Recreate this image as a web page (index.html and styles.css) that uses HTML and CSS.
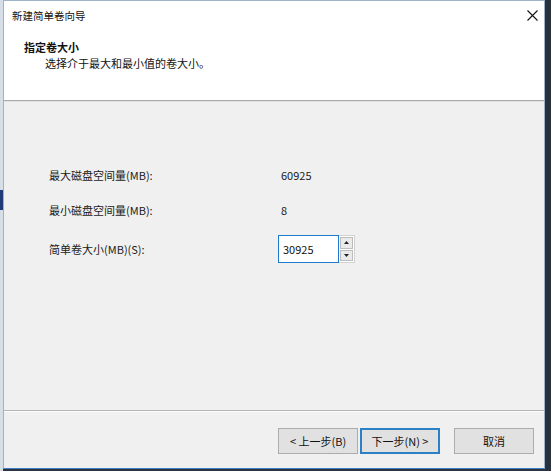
FILE: index.html
```html
<!DOCTYPE html>
<html lang="zh-CN">
<head>
<meta charset="utf-8">
<title>新建简单卷向导</title>
<link rel="stylesheet" href="styles.css">
</head>
<body>
<div class="screen">
  <div class="bg-left">
    <div class="bg-left-band"></div>
    <div class="bg-left-dark"></div>
  </div>
  <div class="dialog">
    <div class="header">
      <div class="titlebar">
        <span class="title">新建简单卷向导</span>
        <span class="close">
          <svg width="11" height="11" viewBox="0 0 11 11"><path d="M0.5 0.5 L10.5 10.5 M10.5 0.5 L0.5 10.5" stroke="#111" stroke-width="1.1" fill="none"/></svg>
        </span>
      </div>
      <div class="head-text">
        <div class="h1">指定卷大小</div>
        <div class="h2">选择介于最大和最小值的卷大小。</div>
      </div>
    </div>
    <div class="content">
      <div class="row">
        <span class="label">最大磁盘空间量(MB):</span>
        <span class="value">60925</span>
      </div>
      <div class="row">
        <span class="label">最小磁盘空间量(MB):</span>
        <span class="value">8</span>
      </div>
      <div class="row row-input">
        <span class="label">简单卷大小(MB)(S):</span>
        <div class="spin">
          <div class="spin-edit">30925</div>
          <div class="spin-btns">
            <div class="spin-btn"><svg width="5" height="3" viewBox="0 0 5 3"><path d="M0 3 L2.5 0 L5 3 Z" fill="#222"/></svg></div>
            <div class="spin-btn"><svg width="5" height="3" viewBox="0 0 5 3"><path d="M0 0 L2.5 3 L5 0 Z" fill="#222"/></svg></div>
          </div>
        </div>
      </div>
    </div>
    <div class="footer">
      <div class="btn">&lt; 上一步(B)</div>
      <div class="btn btn-default">下一步(N) &gt;</div>
      <div class="btn btn-cancel">取消</div>
    </div>
  </div>
  <div class="bg-right"></div>
</div>
</body>
</html>
```

FILE: styles.css
```css
html, body {
  margin: 0;
  padding: 0;
}
body {
  width: 551px;
  height: 471px;
  overflow: hidden;
  font-family: "Noto Sans CJK SC", "Microsoft YaHei", "Noto Sans", sans-serif;
  font-size: 11px;
  color: #111;
  background: #2a3340;
}
.screen {
  display: flex;
  width: 551px;
  height: 471px;
}
.bg-left {
  width: 3px;
  height: 471px;
  background: #d6dee8;
  display: flex;
  flex-direction: column;
}
.bg-left-band {
  height: 190px;
}
.bg-left-dark {
  height: 20px;
  background: #233a78;
}
.dialog {
  width: 542px;
  height: 469px;
  box-sizing: border-box;
  border: 1px solid #9eb2c8;
  border-bottom-color: #3d7fc4;
  background: #f0f0f0;
  display: flex;
  flex-direction: column;
}
.header {
  height: 99px;
  background: #fff;
  border-bottom: 1px solid #a9a9a9;
  box-shadow: 0 1px 0 #e3e3e3;
  display: flex;
  flex-direction: column;
}
.titlebar {
  height: 29px;
  display: flex;
  align-items: center;
  justify-content: space-between;
  padding: 0 6px 0 8px;
}
.title {
  font-size: 10.5px;
  color: #111;
}
.close {
  display: flex;
  width: 11px;
  height: 11px;
}
.head-text {
  padding-left: 20px;
  padding-top: 9px;
}
.h1 {
  font-weight: bold;
  line-height: 16px;
  font-size: 11px;
}
.h2 {
  padding-left: 21px;
  line-height: 16px;
  font-size: 11px;
}
.content {
  height: 310px;
  box-sizing: border-box;
  padding: 64px 0 0 45px;
  display: flex;
  flex-direction: column;
  gap: 15px;
  border-bottom: 1px solid #b4b4b4;
  box-shadow: 0 1px 0 #fdfdfd;
}
.row {
  display: flex;
  align-items: center;
  height: 20px;
}
.row-input {
  height: 28px;
}
.label {
  width: 232px;
  color: #1a1a1a;
}
.value {
  color: #1a1a1a;
}
.spin {
  display: flex;
  height: 28px;
  margin-left: -3px;
}
.spin-edit {
  width: 61px;
  height: 28px;
  box-sizing: border-box;
  border: 1px solid #1f79cc;
  background: #fff;
  padding-left: 4px;
  display: flex;
  align-items: center;
}
.spin-btns {
  width: 16px;
  height: 28px;
  box-sizing: border-box;
  border: 1px solid #d2d2d2;
  border-left: none;
  background: #fff;
  padding: 1px;
  display: flex;
  flex-direction: column;
  gap: 1px;
}
.spin-btn {
  flex: 1;
  border: 1px solid #bcbcbc;
  background: #eaeaea;
  display: flex;
  align-items: center;
  justify-content: center;
}
.footer {
  flex: 1;
  display: flex;
  justify-content: flex-end;
  align-items: flex-start;
  padding: 17px 10px 0 0;
}
.btn {
  width: 80px;
  height: 26px;
  box-sizing: border-box;
  border: 1px solid #adadad;
  background: #e1e1e1;
  display: flex;
  align-items: center;
  justify-content: center;
  color: #111;
}
.btn-default {
  margin-left: 2px;
  border: 2px solid #2d7fc6;
}
.btn-cancel {
  margin-left: 14px;
}
.bg-right {
  flex: 1;
  background: #27313d;
}
```
